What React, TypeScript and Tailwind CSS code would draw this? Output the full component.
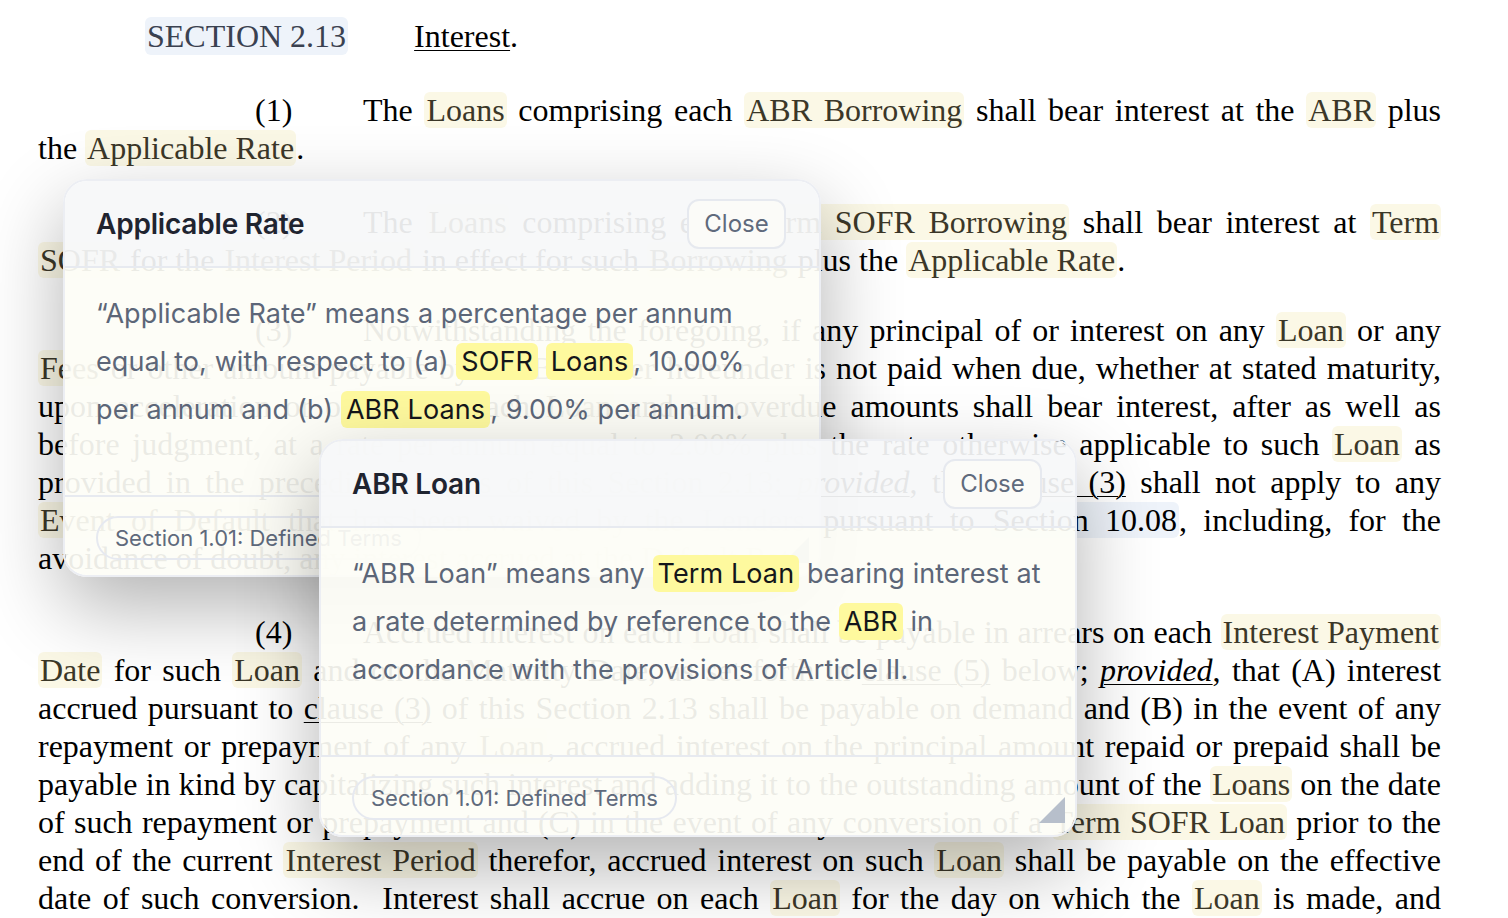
import React from 'react';

const T: React.FC<{ children: React.ReactNode }> = ({ children }) => (
  <span className="rounded-md bg-[#fbf8e6] px-[2px] text-[#3b3728]">{children}</span>
);

const Ref: React.FC<{ children: React.ReactNode }> = ({ children }) => (
  <span className="rounded-md bg-[#eef3fa] px-[2px]">{children}</span>
);

const U: React.FC<{ children: React.ReactNode }> = ({ children }) => (
  <span className="underline decoration-1 underline-offset-[3px]">{children}</span>
);

const Prov = () => (
  <span className="italic underline decoration-1 underline-offset-[3px]">provided</span>
);

// one justified line of the document
const Line: React.FC<{ children: React.ReactNode; last?: boolean }> = ({ children, last }) => (
  <div className={last ? 'text-left' : 'text-justify [text-align-last:justify]'}>{children}</div>
);

const FirstLine: React.FC<{ num: string; children: React.ReactNode }> = ({ num, children }) => (
  <div className="flex">
    <span className="w-[325px] shrink-0 pl-[217px]">{num}</span>
    <div className="flex-1 text-justify [text-align-last:justify]">{children}</div>
  </div>
);

const Hl: React.FC<{ children: React.ReactNode }> = ({ children }) => (
  <span className="rounded-md bg-[#fef99e] px-[5px] py-[2px] text-[#14161a]">{children}</span>
);

interface CardProps {
  title: string;
  className: string;
  children: React.ReactNode;
}

const DefinitionCard: React.FC<CardProps> = ({ title, className, children }) => (
  <div
    className={`absolute flex h-[398px] w-[758px] flex-col overflow-hidden rounded-[24px] border-2 border-[#eceef3] font-[Inter,sans-serif] shadow-[0_30px_80px_rgba(0,0,0,0.3)] ${className}`}
  >
    <div className="flex h-[87px] shrink-0 items-center justify-between border-b-2 border-[#e7eaf0] bg-[#f6f7f9]/[0.93] pl-[31px] pr-[33px]">
      <h3 className="text-[28px] font-semibold tracking-[-0.2px] text-[#1f2430]">{title}</h3>
      <button className="h-[50px] w-[99px] rounded-[12px] border-2 border-[#e6e9ef] bg-[#fbfbf8] text-[24px] text-[#5f6a7c]">
        Close
      </button>
    </div>
    <div className="flex-1 bg-[#fdfdf6]/[0.93] px-[31px] pt-[22px] text-[27px] leading-[48px] tracking-[0.1px] text-[#5c6678]">
      {children}
    </div>
    <div className="relative flex h-[80px] shrink-0 items-center border-t-2 border-[#e7eaf0] bg-[#fdfdf6]/[0.93] px-[31px] pt-[4px]">
      <span className="flex h-[44px] items-center rounded-full border-2 border-[#e6e9f0] px-[17px] text-[22px] text-[#5f6a7c]">
        Section 1.01: Defined Terms
      </span>
      <svg className="absolute bottom-[12px] right-[10px]" width="26" height="26" viewBox="0 0 26 26">
        <polygon points="26,0 26,26 0,26" fill="#b7bfcb" />
      </svg>
    </div>
  </div>
);

export default function App() {
  return (
    <div className="relative h-[918px] w-full overflow-hidden bg-white">
      <div className="ml-[38px] w-[1403px] pt-[17px] font-['Liberation_Serif',serif] text-[32px] leading-[38px] text-black">
        <div className="flex">
          <span className="ml-[107px] rounded-md bg-[#eef3fa] px-[2px] text-[#3a4150]">SECTION 2.13</span>
          <span className="ml-[66px]">
            <U>Interest</U>.
          </span>
        </div>

        <div className="mt-[36px]">
          <FirstLine num="(1)">
            The <T>Loans</T> comprising each <T>ABR Borrowing</T> shall bear interest at the <T>ABR</T> plus
          </FirstLine>
          <Line last>
            the <T>Applicable Rate</T>.
          </Line>
        </div>

        <div className="mt-[36px]">
          <FirstLine num="(2)">
            The <T>Loans</T> comprising each <T>Term SOFR Borrowing</T> shall bear interest at <T>Term</T>
          </FirstLine>
          <Line last>
            <T>SOFR</T> for the <T>Interest Period</T> in effect for such <T>Borrowing</T> plus the <T>Applicable Rate</T>.
          </Line>
        </div>

        <div className="mt-[32px]">
          <FirstLine num="(3)">
            Notwithstanding the foregoing, if any principal of or interest on any <T>Loan</T> or any
          </FirstLine>
          <Line>
            <T>Fees</T> or other amount payable by the <T>Borrower</T> hereunder is not paid when due, whether at stated maturity,
          </Line>
          <Line>
            upon acceleration or otherwise, each <T>Loan</T> and all overdue amounts shall bear interest, after as well as
          </Line>
          <Line>
            before judgment, at a rate per annum equal to 2.00% plus the rate otherwise applicable to such <T>Loan</T> as
          </Line>
          <Line>
            provided in the preceding clauses of this Section 2.13; <Prov />, that <U>clause (3)</U> shall not apply to any
          </Line>
          <Line>
            <T>Event of Default</T> that has been waived by the <T>Lenders</T> pursuant to <Ref>Section 10.08</Ref>, including, for the
          </Line>
          <Line last>avoidance of doubt, any interest accrued at the Default Rate.</Line>
        </div>

        <div className="mt-[36px]">
          <FirstLine num="(4)">
            Accrued interest on each <T>Loan</T> shall be payable in arrears on each <T>Interest Payment</T>
          </FirstLine>
          <Line>
            <T>Date</T> for such <T>Loan</T> and on the Maturity Date, as set forth in <U>clause (5)</U> below; <Prov />, that (A) interest
          </Line>
          <Line>
            accrued pursuant to <U>clause (3)</U> of this Section 2.13 shall be payable on demand and (B) in the event of any
          </Line>
          <Line>
            repayment or prepayment of any <T>Loan</T>, accrued interest on the principal amount repaid or prepaid shall be
          </Line>
          <Line>
            payable in kind by capitalizing such interest and adding it to the outstanding amount of the <T>Loans</T> on the date
          </Line>
          <Line>
            of such repayment or prepayment and (C) in the event of any conversion of a <T>Term SOFR Loan</T> prior to the
          </Line>
          <Line>
            end of the current <T>Interest Period</T> therefor, accrued interest on such <T>Loan</T> shall be payable on the effective
          </Line>
          <Line>
            date of such conversion.&nbsp; Interest shall accrue on each <T>Loan</T> for the day on which the <T>Loan</T> is made, and
          </Line>
          <Line>
            shall not accrue on a <T>Loan</T>, or any portion thereof, for the day on which the <T>Loan</T> is paid.
          </Line>
        </div>
      </div>

      <DefinitionCard title="Applicable Rate" className="left-[63px] top-[179px]">
        <p className="whitespace-nowrap">“Applicable Rate” means a percentage per annum</p>
        <p className="whitespace-nowrap">
          equal to, with respect to (a) <Hl>SOFR</Hl> <Hl>Loans</Hl>, 10.00%
        </p>
        <p className="whitespace-nowrap">
          per annum and (b) <Hl>ABR Loans</Hl>, 9.00% per annum.
        </p>
      </DefinitionCard>

      <DefinitionCard title="ABR Loan" className="left-[319px] top-[439px]">
        <p className="whitespace-nowrap">
          “ABR Loan” means any <Hl>Term Loan</Hl> bearing interest at
        </p>
        <p className="whitespace-nowrap">
          a rate determined by reference to the <Hl>ABR</Hl> in
        </p>
        <p className="whitespace-nowrap">accordance with the provisions of Article II.</p>
      </DefinitionCard>
    </div>
  );
}
